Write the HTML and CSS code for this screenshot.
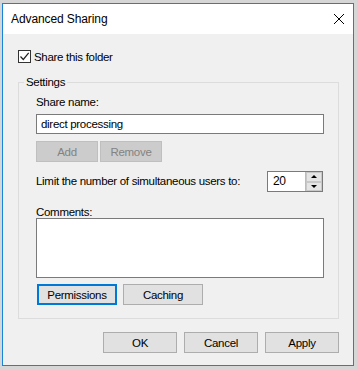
FILE: index.html
```html
<!DOCTYPE html>
<html>
<head>
<meta charset="utf-8">
<link rel="stylesheet" href="styles.css">
</head>
<body>
<div class="window">
  <div class="titlebar">
    <span class="title">Advanced Sharing</span>
    <svg class="close" width="12" height="12" viewBox="0 0 12 12"><path d="M1 1L11 11M11 1L1 11" stroke="#000" stroke-width="1" fill="none"/></svg>
  </div>
  <div class="body">
    <label class="check-row">
      <span class="checkbox"><svg width="11" height="11" viewBox="0 0 11 11"><path d="M1.5 5.5L4.3 8.5L9.7 1.8" stroke="#222" stroke-width="1.2" fill="none"/></svg></span>
      <span class="check-text">Share this folder</span>
    </label>
    <div class="group">
      <div class="group-title">Settings</div>
      <div class="label first">Share name:</div>
      <div class="textbox">direct processing</div>
      <div class="btn-row">
        <div class="btn disabled">Add</div>
        <div class="btn disabled">Remove</div>
      </div>
      <div class="limit-row">
        <span class="label-inline">Limit the number of simultaneous users to:</span>
        <div class="spinner">
          <div class="spin-value">20</div>
          <div class="spin-btns">
            <div class="spin-btn"><span class="arrow-up"></span></div>
            <div class="spin-btn"><span class="arrow-down"></span></div>
          </div>
        </div>
      </div>
      <div class="label comments">Comments:</div>
      <div class="textarea"></div>
      <div class="btn-row bottom-group">
        <div class="btn wide default">Permissions</div>
        <div class="btn wide">Caching</div>
      </div>
    </div>
    <div class="footer">
      <div class="btn foot">OK</div>
      <div class="btn foot">Cancel</div>
      <div class="btn foot">Apply</div>
    </div>
  </div>
</div>
</body>
</html>
```
FILE: styles.css
```css
html, body {
  margin: 0;
  padding: 0;
}
body {
  background: #d6d6d6;
  width: 357px;
  height: 370px;
  overflow: hidden;
  font-family: "Liberation Sans", Arial, sans-serif;
  font-size: 11.5px;
  letter-spacing: -0.3px;
  white-space: nowrap;
  color: #000;
}
.window {
  margin: 3px 0 0 2px;
  width: 352px;
  height: 363px;
  box-sizing: border-box;
  border: 1px solid #1883d7;
  display: flex;
  flex-direction: column;
}
.titlebar {
  height: 30px;
  background: #fff;
  display: flex;
  align-items: center;
  justify-content: space-between;
  padding: 0 8px 0 8px;
  flex: none;
}
.title {
  font-size: 12px;
  letter-spacing: -0.1px;
  line-height: 16px;
}
.close {
  display: block;
}
.body {
  flex: 1;
  background: #f0f0f0;
  padding: 16px 14px 0 15px;
  display: flex;
  flex-direction: column;
}
.check-row {
  display: flex;
  align-items: center;
  height: 13px;
}
.checkbox {
  width: 13px;
  height: 13px;
  box-sizing: border-box;
  border: 1px solid #333;
  background: #fff;
  display: flex;
  align-items: center;
  justify-content: center;
}
.checkbox svg { display: block; }
.check-text {
  margin-left: 3px;
  line-height: 14px;
}
.group {
  margin-top: 19px;
  border: 1px solid #dcdcdc;
  padding: 0 14px 13px 17px;
  display: flex;
  flex-direction: column;
}
.group-title {
  margin: -8px 0 0 -12px;
  padding: 0 2px;
  background: #f0f0f0;
  align-self: flex-start;
  line-height: 14px;
}
.label {
  line-height: 14px;
}
.label.first { margin-top: 6px; }
.textbox {
  margin-top: 5px;
  height: 20px;
  box-sizing: border-box;
  border: 1px solid #7a7a7a;
  background: #fff;
  padding: 0 4px;
  line-height: 18px;
}
.btn-row {
  display: flex;
  gap: 2px;
  margin-top: 7px;
}
.btn {
  height: 21px;
  box-sizing: border-box;
  border: 1px solid #adadad;
  background: #e1e1e1;
  display: flex;
  align-items: center;
  justify-content: center;
}
.btn.disabled {
  width: 62px;
  background: #cccccc;
  border-color: #bfbfbf;
  color: #838383;
}
.limit-row {
  margin-top: 9px;
  display: flex;
  align-items: center;
  justify-content: space-between;
  height: 21px;
}
.label-inline {
  line-height: 14px;
  margin-top: -2px;
}
.spinner {
  width: 56px;
  height: 21px;
  box-sizing: border-box;
  border: 1px solid #7a7a7a;
  background: #fff;
  display: flex;
  margin-right: 1px;
}
.spin-value {
  flex: 1;
  padding-left: 5px;
  line-height: 19px;
  font-size: 12px;
}
.spin-btns {
  width: 17px;
  display: flex;
  flex-direction: column;
  border-left: 1px solid #bcbcbc;
  box-sizing: border-box;
}
.spin-btn {
  flex: 1;
  background: #e5e5e5;
  border: 1px solid #c8c8c8;
  display: flex;
  align-items: center;
  justify-content: center;
}
.arrow-up {
  width: 0;
  height: 0;
  border-left: 3px solid transparent;
  border-right: 3px solid transparent;
  border-bottom: 3px solid #000;
}
.arrow-down {
  width: 0;
  height: 0;
  border-left: 3px solid transparent;
  border-right: 3px solid transparent;
  border-top: 3px solid #000;
}
.label.comments { margin-top: 13px; }
.textarea {
  margin-top: -1px;
  height: 60px;
  box-sizing: border-box;
  border: 1px solid #7a7a7a;
  background: #fff;
}
.bottom-group {
  margin-top: 6px;
  gap: 6px;
  padding-left: 1px;
}
.btn.wide { width: 80px; }
.btn.default {
  border: 2px solid #0078d7;
}
.footer {
  margin-top: 13px;
  display: flex;
  justify-content: flex-end;
  gap: 7px;
}
.btn.foot { width: 74px; }
```
